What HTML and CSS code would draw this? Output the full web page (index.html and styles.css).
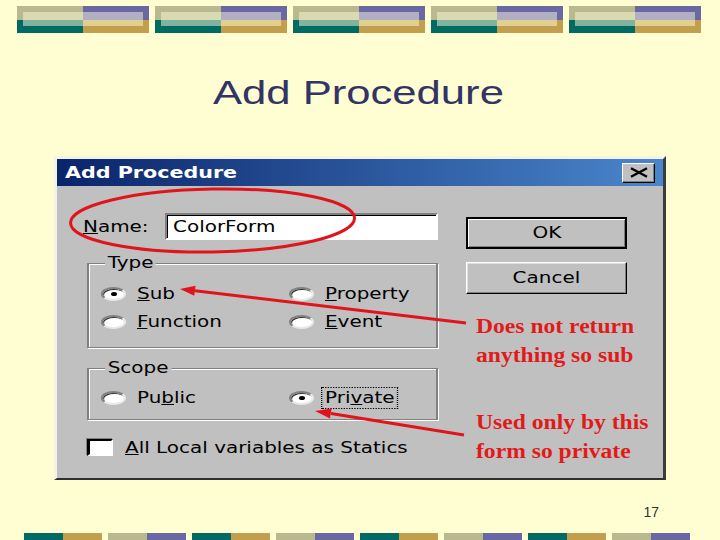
FILE: index.html
```html
<!DOCTYPE html>
<html>
<head>
<meta charset="utf-8">
<link rel="stylesheet" href="styles.css">
</head>
<body>
<div class="slide">
  <div class="banner-top">
    <div class="blk"><div class="blk-in"></div></div>
    <div class="blk"><div class="blk-in"></div></div>
    <div class="blk"><div class="blk-in"></div></div>
    <div class="blk"><div class="blk-in"></div></div>
    <div class="blk"><div class="blk-in"></div></div>
  </div>

  <h1 class="title"><span>Add Procedure</span></h1>

  <div class="dialog">
    <div class="titlebar">
      <span class="ttext">Add Procedure</span>
      <span class="close">
        <svg width="20" height="11" viewBox="0 0 20 11"><path d="M2 1.2 L18 9.8 M18 1.2 L2 9.8" stroke="#000" stroke-width="2.4" fill="none"/></svg>
      </span>
    </div>
    <div class="dbody">
      <div class="left">
        <div class="namerow">
          <div class="namelabel"><span class="w"><u>N</u>ame:</span></div>
          <div class="field"><span class="w">ColorForm</span></div>
        </div>

        <div class="group type">
          <div class="legend">Type</div>
          <div class="row r1">
            <div class="opt"><span class="radio on"><i></i></span><span class="w"><u>S</u>ub</span></div>
            <div class="opt"><span class="radio"><i></i></span><span class="w"><u>P</u>roperty</span></div>
          </div>
          <div class="row r2">
            <div class="opt"><span class="radio"><i></i></span><span class="w"><u>F</u>unction</span></div>
            <div class="opt"><span class="radio"><i></i></span><span class="w"><u>E</u>vent</span></div>
          </div>
        </div>

        <div class="group scope">
          <div class="legend">Scope</div>
          <div class="row r1s">
            <div class="opt"><span class="radio"><i></i></span><span class="w">Pu<u>b</u>lic</span></div>
            <div class="opt"><span class="radio on"><i></i></span><span class="w focus">Pri<u>v</u>ate</span></div>
          </div>
        </div>

        <div class="checkrow">
          <span class="checkbox"></span><span class="w"><u>A</u>ll Local variables as Statics</span>
        </div>
      </div>
      <div class="right">
        <div class="btn default"><span class="wc">OK</span></div>
        <div class="btn"><span class="wc">Cancel</span></div>
      </div>
    </div>
  </div>

  <div class="pagenum">17</div>

  <div class="banner-bottom">
    <div class="bb"></div>
    <div class="bb alt"></div>
    <div class="bb"></div>
    <div class="bb alt"></div>
    <div class="bb"></div>
    <div class="bb alt"></div>
    <div class="bb"></div>
    <div class="bb alt"></div>
  </div>

  <div class="notes">
    <p class="note"><span>Does not return<br>anything so sub</span></p>
    <p class="note second"><span>Used only by this<br>form so private</span></p>
  </div>

  <svg class="marks" width="720" height="540" viewBox="0 0 720 540">
    <ellipse cx="212.5" cy="220.5" rx="142" ry="31.5" fill="none" stroke="#e0141b" stroke-width="3" transform="rotate(-1 212.5 220.5)"/>
    <line x1="466" y1="323" x2="195" y2="290.8" stroke="#e0141b" stroke-width="3"/>
    <polygon points="180,289 195.5,285.8 194.3,295.8" fill="#e0141b"/>
    <line x1="464" y1="435" x2="331" y2="413.5" stroke="#e0141b" stroke-width="3"/>
    <polygon points="315,411 331.6,408.6 330,418.4" fill="#e0141b"/>
  </svg>
</div>
</body>
</html>
```
FILE: styles.css
```css
body {
  margin: 0;
  background: #fffed3;
}

.slide {
  width: 720px;
  height: 540px;
  position: relative;
  overflow: hidden;
  display: flex;
  flex-direction: column;
  font-family: "Liberation Sans", Arial, sans-serif;
  background: #fffed3;
}

/* top decorative banner */
.banner-top {
  display: flex;
  gap: 6px;
  padding-left: 17px;
  margin-top: 6px;
  flex: none;
}

.blk {
  width: 132px;
  height: 27px;
  box-sizing: border-box;
  padding: 6px 6px 7px;
  background:
    linear-gradient(to right, #b9b98f 50%, #6a68a2 50%) top / 100% 14px no-repeat,
    linear-gradient(to right, #006a64 50%, #c29f4c 50%) bottom / 100% 13px no-repeat;
}

.blk-in {
  height: 14px;
  background:
    linear-gradient(to right, #d9dab1 50%, #b1afc3 50%) top / 100% 8px no-repeat,
    linear-gradient(to right, #82b3a0 50%, #e0cf8e 50%) bottom / 100% 6px no-repeat;
}

/* slide title */
.title {
  margin: 39px 0 0;
  padding-right: 3px;
  height: 40px;
  line-height: 40px;
  text-align: center;
  font-weight: normal;
  font-size: 34px;
  color: #333366;
  flex: none;
}

.title span {
  display: inline-block;
  transform: scaleX(1.283);
}

/* dialog */
.dialog {
  margin: 44px 0 0 54px;
  width: 612px;
  height: 324px;
  box-sizing: border-box;
  border-style: solid;
  border-width: 3px 3px 2px 3px;
  border-color: #f3f3ec #3c3c3c #303030 #f3f3ec;
  background: #c0c0c0;
  display: flex;
  flex-direction: column;
  font-family: "DejaVu Sans", sans-serif;
  font-size: 15px;
  line-height: 16px;
  color: #000;
  flex: none;
}

.titlebar {
  height: 27px;
  flex: none;
  display: flex;
  align-items: center;
  justify-content: space-between;
  padding: 0 8px;
  background: linear-gradient(to right, #0a246a, #4a86cc);
}

.ttext {
  color: #fff;
  font-weight: bold;
  font-size: 16px;
  display: inline-block;
  transform: scaleX(1.29);
  transform-origin: left center;
}

.close {
  width: 33px;
  height: 20px;
  box-sizing: border-box;
  background: #c0c0c0;
  border: 1px solid;
  border-color: #fff #000 #000 #fff;
  box-shadow: inset -1px -1px 0 #808080;
  display: flex;
  align-items: center;
  justify-content: center;
}

.close svg {
  display: block;
}

.dbody {
  flex: 1;
  display: flex;
}

.left {
  width: 381px;
  box-sizing: border-box;
  padding-left: 30px;
  display: flex;
  flex-direction: column;
}

.w {
  display: inline-block;
  transform: scaleX(1.33);
  transform-origin: left center;
  white-space: nowrap;
}

.wc {
  display: inline-block;
  transform: scaleX(1.33);
  transform-origin: center center;
}

.namerow {
  margin: 27px 0 0 -4px;
  height: 27px;
  display: flex;
  align-items: center;
}

.namelabel {
  width: 82px;
  flex: none;
}

.field {
  flex: 1;
  height: 27px;
  box-sizing: border-box;
  background: #fff;
  border: 2px solid;
  border-color: #808080 #fff #fff #808080;
  box-shadow: inset 1px 1px 0 #000;
  padding-left: 6px;
  display: flex;
  align-items: center;
}

.group {
  margin-top: 23px;
  height: 85px;
  box-sizing: border-box;
  border-style: solid;
  border-color: #808080;
  border-width: 1px 2px;
  box-shadow: inset 1px 1px 0 #fff, 1px 1px 0 #fff;
  padding-left: 12px;
  display: flex;
  flex-direction: column;
}

.group.scope {
  margin-top: 20px;
  height: 52px;
}

.legend {
  align-self: flex-start;
  margin: -9px 0 0 4px;
  padding: 0 2px;
  background: #c0c0c0;
  transform: scaleX(1.33);
  transform-origin: left center;
}

.row {
  display: flex;
  align-items: center;
  height: 20px;
}

.row.r1 { margin-top: 13px; }
.row.r2 { margin-top: 8px; }
.row.r1s { margin-top: 12px; }

.opt {
  display: flex;
  align-items: center;
}

.opt:first-child {
  width: 188px;
  flex: none;
}

.radio {
  width: 25px;
  height: 14px;
  box-sizing: border-box;
  margin-right: 11px;
  border-radius: 50%;
  background: #fff;
  border: 2px solid;
  border-color: #808080 #e8e8e8 #e8e8e8 #808080;
  box-shadow: inset 1px 1px 0 #303030;
  display: flex;
  align-items: center;
  justify-content: center;
  flex: none;
}

.radio i {
  width: 6px;
  height: 4px;
  border-radius: 50%;
}

.radio.on i {
  background: #000;
}

.focus {
  outline: 1px dotted #000;
  outline-offset: 2px;
}

.checkrow {
  margin-top: 19px;
  height: 17px;
  display: flex;
  align-items: center;
}

.checkbox {
  width: 26px;
  height: 17px;
  box-sizing: border-box;
  background: #fff;
  border-style: solid;
  border-width: 2px 2px 2px 3px;
  border-color: #000 #fff #fff #000;
  box-shadow: -1px -1px 0 #808080;
  margin-right: 12px;
  flex: none;
}

.right {
  padding: 31px 0 0 28px;
  display: flex;
  flex-direction: column;
  gap: 13px;
}

.btn {
  width: 161px;
  height: 32px;
  box-sizing: border-box;
  display: flex;
  align-items: center;
  justify-content: center;
  background: #c0c0c0;
  border: 1px solid;
  border-color: #fff #000 #000 #fff;
  box-shadow: inset -1px -1px 0 #808080, inset 1px 1px 0 #dfdfdf;
}

.btn.default {
  border: 2px solid #000;
  box-shadow: inset 1px 1px 0 #fff, inset -1px -1px 0 #808080;
}

/* page number */
.pagenum {
  margin-top: 24px;
  height: 16px;
  line-height: 16px;
  font-size: 14px;
  text-align: right;
  padding-right: 61px;
  color: #333;
  flex: none;
}

/* bottom banner */
.banner-bottom {
  display: flex;
  gap: 6px;
  padding-left: 24px;
  margin-top: 13px;
  flex: none;
}

.bb {
  width: 78px;
  height: 10px;
  background: linear-gradient(to right, #006a64 50%, #c29f4c 50%);
}

.bb.alt {
  background: linear-gradient(to right, #b9b98f 50%, #6a68a2 50%);
}

/* annotations over the dialog */
.notes {
  position: absolute;
  left: 476px;
  top: 312px;
  font-family: "Liberation Serif", "Times New Roman", serif;
  font-weight: bold;
  font-size: 20px;
  line-height: 29px;
  color: #e01b1b;
}

.note {
  margin: 0;
}

.note.second {
  margin-top: 38px;
}

.note span {
  display: inline-block;
  transform: scaleX(1.18);
  transform-origin: left top;
  white-space: nowrap;
}

.marks {
  position: absolute;
  left: 0;
  top: 0;
  pointer-events: none;
}
```
